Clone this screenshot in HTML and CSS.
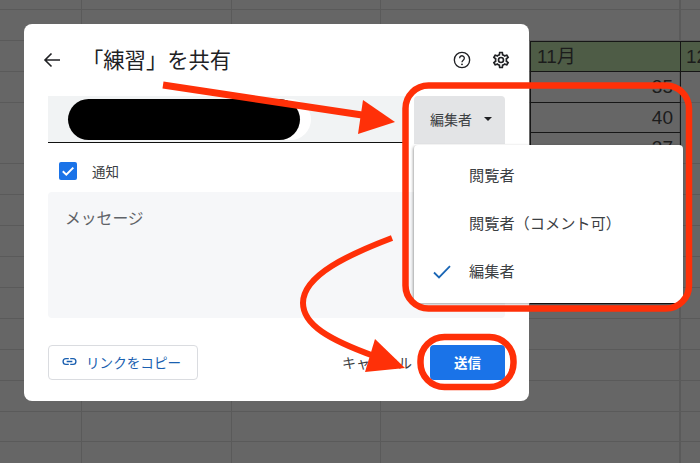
FILE: index.html
```html
<!DOCTYPE html>
<html lang="ja">
<head>
<meta charset="utf-8">
<title>共有</title>
<link rel="stylesheet" href="styles.css">
</head>
<body>
<div class="sheet">
  <div class="cell head c-nov">11月</div>
  <div class="cell head c-dec">12</div>
  <div class="cell num r1">35</div>
  <div class="cell num r2">40</div>
  <div class="cell num r3">37</div>
</div>

<section class="dialog">
  <header class="title-row">
    <svg class="back" viewBox="0 0 24 24" width="24" height="24"><path d="M20 12H5M11.5 5.5 5 12l6.5 6.5" fill="none" stroke="#202124" stroke-width="1.6"/></svg>
    <h1 class="title">「練習」を共有</h1>
    <svg class="icon-help" viewBox="0 0 24 24" width="20" height="20"><circle cx="12" cy="12" r="9.2" fill="none" stroke="#202124" stroke-width="1.6"/><path d="M9.2 9.8a2.8 2.8 0 1 1 4.5 2.2c-1 .8-1.7 1.2-1.7 2.6" fill="none" stroke="#202124" stroke-width="1.6"/><circle cx="12" cy="17.2" r="1.1" fill="#202124"/></svg>
    <svg class="icon-gear" viewBox="0 0 24 24" width="20" height="20"><path d="M19.43 12.98c.04-.32.07-.64.07-.98s-.03-.66-.07-.98l2.11-1.65a.5.5 0 0 0 .12-.64l-2-3.46a.5.5 0 0 0-.61-.22l-2.49 1a7.3 7.3 0 0 0-1.69-.98l-.38-2.65A.49.49 0 0 0 14 2h-4a.49.49 0 0 0-.49.42l-.38 2.65c-.61.25-1.17.59-1.69.98l-2.49-1a.5.5 0 0 0-.61.22l-2 3.46a.49.49 0 0 0 .12.64l2.11 1.65c-.04.32-.07.65-.07.98s.03.66.07.98l-2.11 1.65a.5.5 0 0 0-.12.64l2 3.46c.12.22.39.3.61.22l2.49-1c.52.4 1.08.73 1.69.98l.38 2.65c.03.24.24.42.49.42h4c.25 0 .46-.18.49-.42l.38-2.65c.61-.25 1.17-.59 1.69-.98l2.49 1c.23.09.49 0 .61-.22l2-3.46a.5.5 0 0 0-.12-.64l-2.11-1.65ZM17.45 11.27c.04.31.05.52.05.73s-.02.43-.05.73l-.14 1.13.89.7 1.08.84-.7 1.21-1.27-.51-1.04-.42-.9.68c-.43.32-.84.56-1.25.73l-1.06.43-.16 1.13-.2 1.35h-1.4l-.19-1.35-.16-1.13-1.06-.43c-.43-.18-.83-.41-1.23-.71l-.91-.7-1.06.43-1.27.51-.7-1.21 1.08-.84.89-.7-.14-1.13c-.03-.31-.05-.54-.05-.74s.02-.43.05-.73l.14-1.13-.89-.7-1.08-.84.7-1.21 1.27.51 1.04.42.9-.68c.43-.32.84-.56 1.25-.73l1.06-.43.16-1.13.2-1.35h1.39l.19 1.35.16 1.13 1.06.43c.43.18.83.41 1.23.71l.91.7 1.06-.43 1.27-.51.7 1.21-1.07.85-.89.7.14 1.13ZM12 8a4 4 0 1 0 0 8 4 4 0 0 0 0-8Zm0 6a2 2 0 1 1 0-4 2 2 0 0 1 0 4Z" fill="#202124"/></svg>
  </header>

  <div class="invite-row">
    <div class="invite-input">
      <div class="chip"><div class="redaction"></div></div>
    </div>
    <button class="role-btn">編集者<span class="caret"></span></button>
  </div>

  <label class="notify">
    <span class="checkbox"><svg viewBox="0 0 18 18" width="18" height="18"><path d="M3.8 9.3 7.3 12.7 14.3 5.6" fill="none" stroke="#fff" stroke-width="2"/></svg></span>
    <span>通知</span>
  </label>

  <div class="message">メッセージ</div>

  <footer class="actions">
    <button class="copy-link">
      <svg viewBox="0 0 24 24" width="17" height="17"><path d="M3.9 12A3.1 3.1 0 0 1 7 8.9h4V7H7a5 5 0 0 0 0 10h4v-1.9H7A3.1 3.1 0 0 1 3.9 12ZM8 13h8v-2H8v2Zm9-6h-4v1.9h4a3.1 3.1 0 0 1 0 6.2h-4V17h4a5 5 0 0 0 0-10Z" fill="#1a5fb0"/></svg>
      リンクをコピー
    </button>
    <span class="cancel">キャンセル</span>
    <button class="send">送信</button>
  </footer>
</section>

<div class="role-menu">
  <div class="menu-item">閲覧者</div>
  <div class="menu-item">閲覧者（コメント可）</div>
  <div class="menu-item">
    <svg class="tick" viewBox="0 0 18 14" width="18" height="14"><path d="M1 7.5 6 12.5 17 1.2" fill="none" stroke="#1a66b5" stroke-width="1.8"/></svg>
    編集者
  </div>
</div>

<svg class="marks" viewBox="0 0 700 463" width="700" height="463">
  <path d="M530 303.5H682" fill="none" stroke="#111"/>
  <g fill="none" stroke="#ff3008" stroke-width="6.5">
    <rect x="405.5" y="85.5" width="283.5" height="223" rx="23"/>
    <rect x="420.5" y="337" width="93" height="50" rx="24"/>
    <path d="M392 238C350 254 303 275 303 303C303 325 330 340 374 356" stroke-width="6"/>
    <path d="M163 85 372 116.5" stroke-width="7"/>
  </g>
  <g fill="#ff3008">
    <path d="M363 100 395 122 358 134Z"/>
    <path d="M375 339 405 368 365 372Z"/>
  </g>
</svg>
</body>
</html>
```
FILE: styles.css
```css
html, body { margin: 0; padding: 0; }
body {
  width: 700px;
  height: 463px;
  overflow: hidden;
  position: relative;
  background: #666;
  font-family: "Liberation Sans", "Noto Sans CJK JP", sans-serif;
  color: #202124;
  text-spacing-trim: space-all;
}
button { font: inherit; cursor: pointer; }

.sheet {
  position: absolute;
  inset: 0;
  display: grid;
  grid-template-columns: 530px 151px 19px;
  grid-template-rows: 40.8px repeat(4, 30.9px);
  align-content: start;
  background-color: #666;
  background-image:
    repeating-linear-gradient(to bottom, transparent 0, transparent 8.9px, #5a5a5a 8.9px, #5a5a5a 9.9px, transparent 9.9px, transparent 30.9px),
    linear-gradient(to right, transparent 81.5px, #5a5a5a 81.5px, #5a5a5a 82.5px, transparent 82.5px, transparent 231px, #5a5a5a 231px, #5a5a5a 232px, transparent 232px, transparent 380.5px, #5a5a5a 380.5px, #5a5a5a 381.5px, transparent 381.5px, transparent 529.5px, #5a5a5a 529.5px, #5a5a5a 530.5px, transparent 530.5px, transparent 679.5px, #5a5a5a 679.5px, #5a5a5a 680.5px, transparent 680.5px);
}
.cell {
  grid-column: 2;
  border-bottom: 1px solid #161616;
  border-right: 1px solid #161616;
  border-left: 1px solid #161616;
  font-size: 19px;
  line-height: 30px;
  color: #1c1c1c;
  box-sizing: border-box;
  overflow: hidden;
}
.head { background: #4e5c46; padding-left: 6px; border-top: 1px solid #161616; grid-row: 2; }
.c-dec { grid-column: 3; border-right: 0; border-left: 0; padding-left: 5px; }
.num { text-align: right; padding-right: 7px; }
.r1 { grid-row: 3; }
.r2 { grid-row: 4; }
.r3 { grid-row: 5; }

.dialog {
  position: absolute;
  left: 24px;
  top: 24px;
  width: 505px;
  height: 377px;
  box-sizing: border-box;
  padding: 0 24px;
  background: #fff;
  border-radius: 8px;
  display: flex;
  flex-direction: column;
}
.title-row {
  display: flex;
  align-items: center;
  height: 72px;
  flex: none;
}
.back { margin-left: -8px; flex: none; }
.title {
  margin: 0 0 2px 18px;
  font: 400 21.3px/28px "Noto Sans CJK JP", sans-serif;
  flex: 1;
}
.icon-help { margin-right: 19px; }
.icon-gear { margin-right: -6px; }

.invite-row { display: flex; gap: 9px; height: 48px; flex: none; }
.invite-input {
  width: 357px;
  height: 47px;
  background: #f1f3f4;
  border-bottom: 1px solid #111;
  box-sizing: border-box;
  padding: 3px 0 0 20px;
}
.chip {
  width: 243px;
  height: 41px;
  border-radius: 21px;
  background: #fff;
}
.redaction {
  width: 232px;
  height: 41px;
  border-radius: 21px;
  background: #000;
}
.role-btn {
  flex: 1;
  height: 48px;
  border: 0;
  border-radius: 4px 4px 0 0;
  background: #e3e4e6;
  display: flex;
  align-items: center;
  gap: 12px;
  padding: 0 0 2px 16px;
  font: 400 14px "Noto Sans CJK JP", sans-serif;
  color: #3c4043;
}
.caret {
  width: 0;
  height: 0;
  border-left: 4.5px solid transparent;
  border-right: 4.5px solid transparent;
  border-top: 4.5px solid #202124;
}

.notify {
  display: flex;
  align-items: center;
  gap: 15px;
  height: 48px;
  box-sizing: border-box;
  padding-top: 6px;
  margin-left: 11px;
  font: 400 13.5px "Noto Sans CJK JP", sans-serif;
  color: #3c4043;
  flex: none;
}
.checkbox {
  width: 18px;
  height: 18px;
  border-radius: 2px;
  background: #1a73e8;
  display: block;
}
.checkbox svg { display: block; }

.message {
  height: 126px;
  flex: none;
  box-sizing: border-box;
  padding: 13px 17px;
  background: #f6f7f9;
  border-radius: 4px;
  font: 400 15.8px/26px "Noto Sans CJK JP", sans-serif;
  color: #5f6368;
}

.actions {
  display: flex;
  align-items: center;
  margin-top: 27px;
  height: 35px;
}
.copy-link {
  width: 150px;
  height: 35px;
  box-sizing: border-box;
  background: #fff;
  border: 1px solid #dadce0;
  border-radius: 4px;
  display: flex;
  align-items: center;
  gap: 8px;
  padding: 0 0 2px 12px;
  font: 400 13.6px "Noto Sans CJK JP", sans-serif;
  color: #1a5fb0;
  white-space: nowrap;
}
.cancel {
  margin-left: auto;
  margin-right: 18px;
  padding-bottom: 1px;
  font: 400 14px "Noto Sans CJK JP", sans-serif;
  color: #3c4043;
}
.send {
  width: 75px;
  height: 35px;
  border: 0;
  border-radius: 4px;
  padding: 0 0 1px;
  background: #1a73e8;
  color: #fff;
  font: 700 13.5px "Noto Sans CJK JP", sans-serif;
}

.role-menu {
  position: absolute;
  left: 414px;
  top: 145px;
  width: 269px;
  height: 158px;
  box-sizing: border-box;
  padding: 5px 0 9px;
  background: #fff;
  border-radius: 4px;
  box-shadow: -1px 1px 3px rgba(0,0,0,.35);
  display: flex;
  flex-direction: column;
  font: 400 15.2px "Noto Sans CJK JP", sans-serif;
  color: #3c4043;
}
.menu-item {
  flex: 1;
  display: flex;
  align-items: center;
  padding-left: 55px;
  position: relative;
}
.tick { position: absolute; left: 19px; top: 19px; }

.marks { position: absolute; left: 0; top: 0; pointer-events: none; }
```
